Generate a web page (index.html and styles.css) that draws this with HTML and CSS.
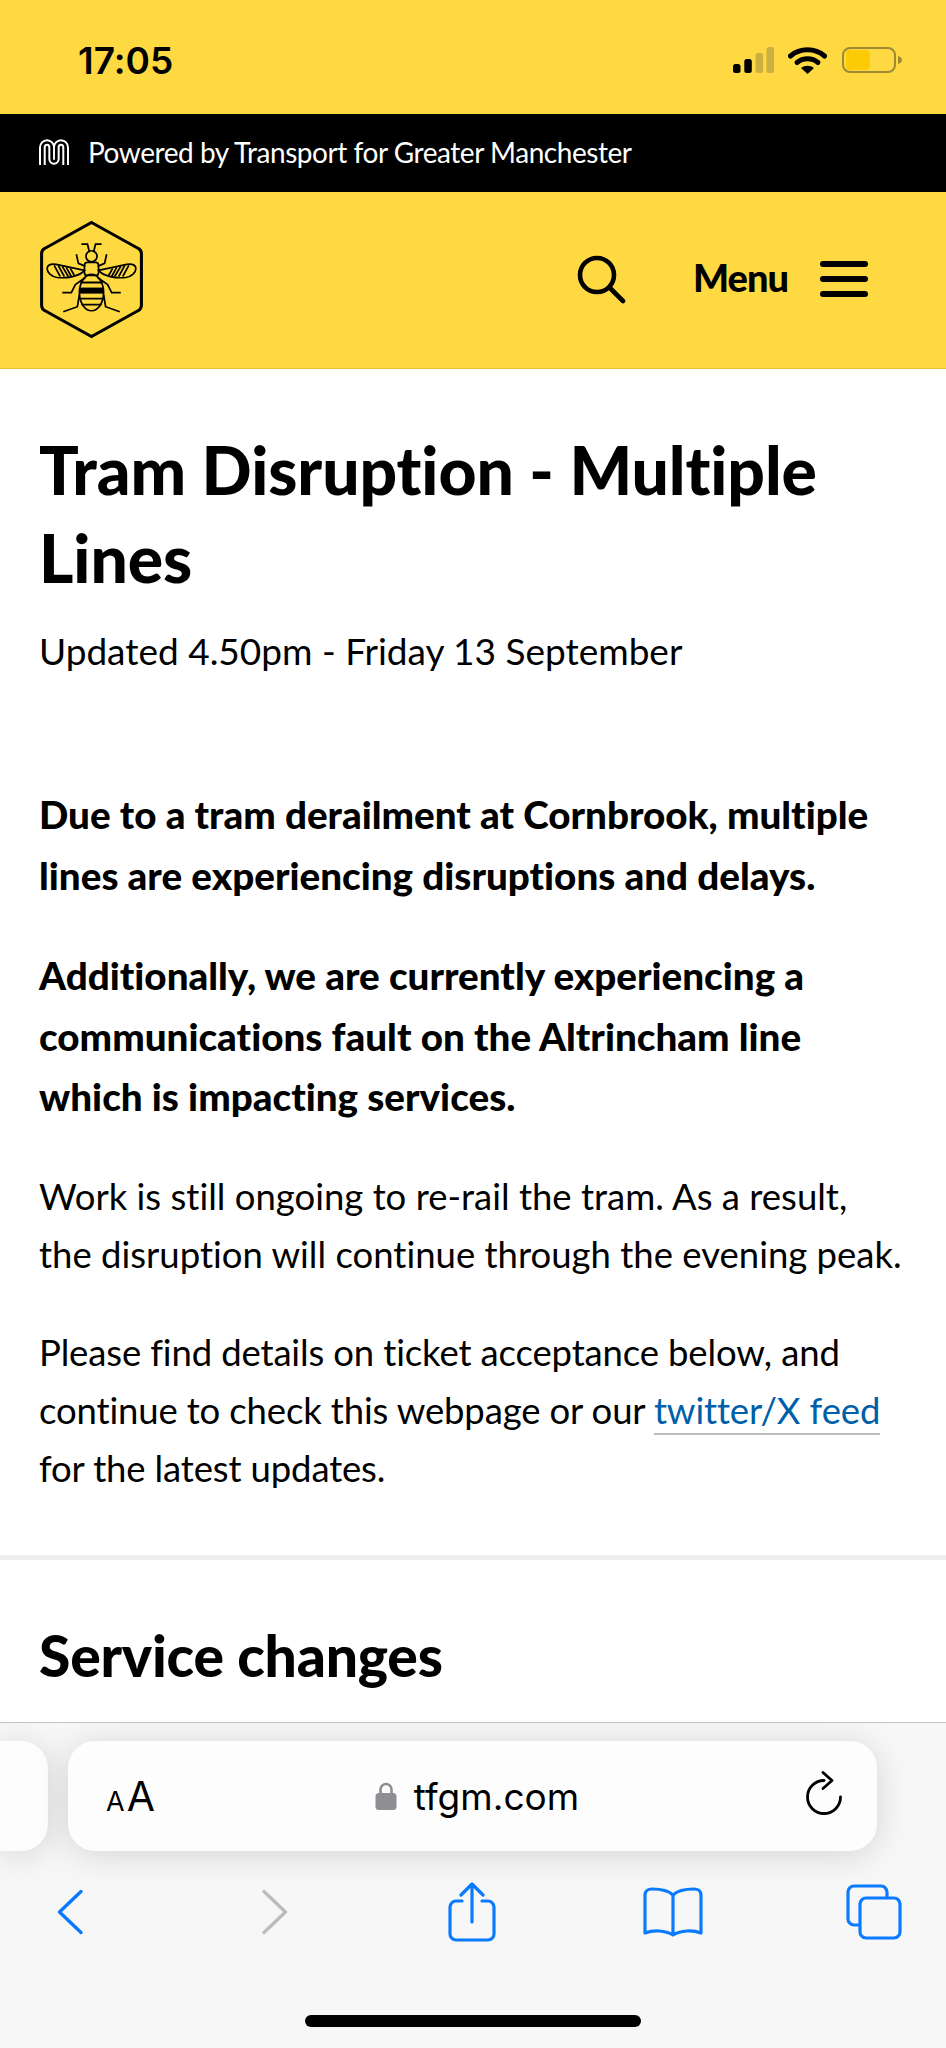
FILE: index.html
```html
<!DOCTYPE html>
<html lang="en">
<head>
  <meta charset="UTF-8"/>
  <meta name="viewport" content="width=device-width,initial-scale=1.0"/>
  <title>Tram Disruption - Multiple Lines</title>
  <link rel="stylesheet" href="styles.css">
</head>
<body>
  <div class="phone">
    <!-- iOS status bar -->
    <div class="status-bar">
      <span class="clock">17:05</span>
      <div class="status-icons">
        <svg class="signal" viewBox="0 0 41 26" width="41" height="26">
          <rect x="0" y="17" width="7.500" height="9" rx="2.500" fill="#000"/>
          <rect x="11.300" y="12" width="7.500" height="14" rx="2.500" fill="#000"/>
          <rect x="22.600" y="6" width="7.500" height="20" rx="2.500" fill="#c9b03f"/>
          <rect x="33.500" y="0" width="7.500" height="26" rx="2.500" fill="#c9b03f"/>
        </svg>
        <svg class="wifi" viewBox="0 0 39 28" width="39" height="28">
          <path d="M2.500 10C12 1.800 27 1.800 36.500 10" fill="none" stroke="#000" stroke-width="5" stroke-linecap="round"/>
          <path d="M9 16.500C15 11.500 24 11.500 30 16.500" fill="none" stroke="#000" stroke-width="5" stroke-linecap="round"/>
          <path d="M13 22C17 19 22 19 26 22L19.500 28Z" fill="#000"/>
        </svg>
        <svg class="battery" viewBox="0 0 60 26" width="60" height="26">
          <rect x="1" y="1" width="52" height="24" rx="7" fill="none" stroke="#9c8a32" stroke-width="2"/>
          <rect x="4" y="3" width="24" height="20" rx="3.500" fill="#fdca06"/>
          <path d="M56 9c2.500.8 4 2.200 4 4s-1.500 3.200-4 4z" fill="#9c8a32"/>
        </svg>
      </div>
    </div>

    <div class="powered-bar">
      <svg class="metro-logo" viewBox="0 0 30 26" width="30" height="26">
        <path d="M3.350 26V8.500a4.670 5 0 0 1 9.350 0V20a2.300 2.300 0 0 0 4.600 0V8.500a4.670 5 0 0 1 9.350 0V26" fill="none" stroke="#fff" stroke-width="6.700"/>
        <path d="M3.350 27V8.500a4.670 5 0 0 1 9.350 0V20a2.300 2.300 0 0 0 4.600 0V8.500a4.670 5 0 0 1 9.350 0V27" fill="none" stroke="#000" stroke-width="2.700"/>
      </svg>
      <span>Powered by Transport for Greater Manchester</span>
    </div>

    <header class="site-header">
      <svg class="bee-logo" viewBox="0 0 106 118" width="107" height="119">
        <path d="M53 2.500 99 28a6 6 0 0 1 3.500 5.500V84.500a6 6 0 0 1-3.500 5.500L53 115.500 7 90a6 6 0 0 1-3.500-5.500V33.500A6 6 0 0 1 7 28Z" fill="none" stroke="#000" stroke-width="3"/>
        <g fill="none" stroke="#000" stroke-width="1.700">
          <circle cx="53" cy="36" r="5.500"/>
          <rect x="46" y="42" width="14" height="13" rx="3"/>
          <ellipse cx="53" cy="72" rx="12" ry="18"/>
          <path d="M43 24h6l2 8M63 24h-6l-2 8M38 34l2 9 7 3M68 34l-2 9-7 3"/>
          <path d="M46 50 18 44c-6-1-9 1-9 4 0 4 4 8 10 9 10 1 22-1 27-7ZM60 50l28-6c6-1 9 1 9 4 0 4-4 8-10 9-10 1-22-1-27-7Z"/>
          <path d="M16 45l6 11M20 45l6 11M24 46l6 10M28 47l5 9M32 48l4 7M90 45l-6 11M86 45l-6 11M82 46l-6 10M78 47l-5 9M74 48l-4 7"/>
          <path d="M47 57 37 64l-4 8H24M59 57l10 7 4 8h9M41 74l-2 12-14 5M65 74l2 12 14 5"/>
        </g>
        <path d="M41 67h24v6H41z" fill="#000"/>
        <path d="M42 62h22M41 78h24M43 84h20" stroke="#000" stroke-width="1.800"/>
      </svg>
      <div class="header-actions">
        <svg class="search-icon" viewBox="0 0 50 50" width="50" height="50">
          <circle cx="21" cy="21" r="17" fill="none" stroke="#000" stroke-width="4.600"/>
          <path d="M33.500 33.500 47 47" stroke="#000" stroke-width="4.600" stroke-linecap="round"/>
        </svg>
        <div class="menu-toggle">
          <span>Menu</span>
          <div class="burger"><i></i><i></i><i></i></div>
        </div>
      </div>
    </header>

    <main class="content">
      <h1>Tram Disruption - Multiple Lines</h1>
      <p class="updated">Updated 4.50pm - Friday 13 September</p>
      <div class="intro">
        <p class="lead">Due to a tram derailment at Cornbrook, multiple lines are experiencing disruptions and delays.</p>
        <p class="lead">Additionally, we are currently experiencing a communications fault on the Altrincham line which is impacting services.</p>
        <p class="body-text wide">Work is still ongoing to re-rail the tram. As a result,<br>the disruption will continue through the evening peak.</p>
        <p class="body-text">Please find details on ticket acceptance below, and continue to check this webpage or our <a href="#">twitter/X feed</a> for the latest updates.</p>
      </div>
      <hr class="divider">
      <h2>Service changes</h2>
    </main>

    <!-- Safari toolbar -->
    <div class="safari-bar">
      <div class="tabs-row">
        <div class="tab-stub"></div>
        <div class="address-pill">
          <span class="aa"><small>A</small>A</span>
          <span class="url">
            <svg viewBox="0 0 22 30" width="22" height="30">
              <path d="M5.500 13V8.500a5.500 5.500 0 0 1 11 0V13" fill="none" stroke="#8e8e93" stroke-width="2.600"/>
              <rect x="0.500" y="12" width="21" height="17" rx="3.500" fill="#8e8e93"/>
            </svg>
            tfgm.com
          </span>
          <svg class="reload" viewBox="0 0 38 44" width="38" height="44">
            <path d="M19 9.500A16.500 16.500 0 1 0 35.500 26" fill="none" stroke="#000" stroke-width="2.800" stroke-linecap="round"/>
            <path d="M18 1.500 27 9.500 18 17.500" fill="none" stroke="#000" stroke-width="2.800" stroke-linecap="round" stroke-linejoin="round"/>
          </svg>
        </div>
      </div>
      <nav class="nav-row">
        <div class="nav-item"><svg viewBox="0 0 28 46" width="28" height="46"><path d="M25 2.500 3.500 23 25 43.500" fill="none" stroke="#0a7aff" stroke-width="3.400" stroke-linecap="round" stroke-linejoin="round"/></svg></div>
        <div class="nav-item nudge"><svg viewBox="0 0 28 46" width="28" height="46"><path d="M3 2.500 24.500 23 3 43.500" fill="none" stroke="#bcbcbc" stroke-width="3.400" stroke-linecap="round" stroke-linejoin="round"/></svg></div>
        <div class="nav-item"><svg viewBox="0 0 48 60" width="48" height="60"><path d="M14 19H8a6 6 0 0 0-6 6v27a6 6 0 0 0 6 6h32a6 6 0 0 0 6-6V25a6 6 0 0 0-6-6h-6M24 40V3M13 13 24 2l11 11" fill="none" stroke="#0a7aff" stroke-width="3.200" stroke-linecap="round" stroke-linejoin="round"/></svg></div>
        <div class="nav-item"><svg viewBox="0 0 60 50" width="60" height="50"><path d="M30 8C25 3 18 2 9 2 5 2 2 4 2 8v38c8-3 20-3 28 2 8-5 20-5 28-2V8c0-4-3-6-7-6-9 0-16 1-21 6ZM30 8v38" fill="none" stroke="#0a7aff" stroke-width="3.200" stroke-linecap="round" stroke-linejoin="round"/></svg></div>
        <div class="nav-item"><svg viewBox="0 0 56 56" width="56" height="56"><path d="M14 41H8a6 6 0 0 1-6-6V8a6 6 0 0 1 6-6h27a6 6 0 0 1 6 6v5" fill="none" stroke="#0a7aff" stroke-width="3.200"/><rect x="14" y="14" width="40" height="40" rx="6" fill="none" stroke="#0a7aff" stroke-width="3.200"/></svg></div>
      </nav>
      <div class="home-indicator"></div>
    </div>
  </div>
</body>
</html>
```

FILE: styles.css
```css
:root {
  --yellow: #ffd942;
  --text: #000;
  --link: #005fa8;
  --chrome: #f7f7f7;
}
* { box-sizing: border-box; }
html, body { height: 100%; }
body {
  margin: 0;
  background: #fff;
  color: var(--text);
  font-family: "Lato", "Noto Sans", sans-serif;
  font-variant-ligatures: none;
}
.phone {
  display: flex;
  flex-direction: column;
  height: 2048px;
  overflow: hidden;
}

/* Status bar */
.status-bar {
  flex: 0 0 114px;
  display: flex;
  justify-content: space-between;
  align-items: center;
  padding: 6px 44px 0 78px;
  background: var(--yellow);
}
.clock {
  font-family: "Inter", sans-serif;
  font-size: 37px;
  font-weight: 600;
}
.status-icons {
  display: flex;
  align-items: center;
  gap: 14px;
}
.battery { margin-left: 1px; }

/* Black strip */
.powered-bar {
  flex: 0 0 78px;
  display: flex;
  align-items: center;
  gap: 19px;
  padding: 0 0 2px 39px;
  background: #000;
  color: #fff;
  font-size: 28px;
  letter-spacing: -0.45px;
}

/* Site header */
.site-header {
  flex: 0 0 177px;
  display: flex;
  align-items: center;
  justify-content: space-between;
  padding: 0 78px 0 38px;
  background: var(--yellow);
  border-bottom: 1px solid #e8c52e;
}
.bee-logo { margin-top: -2px; }
.header-actions {
  display: flex;
  align-items: center;
  gap: 67px;
  margin-top: -2px;
}
.menu-toggle {
  display: flex;
  align-items: center;
  gap: 32px;
  font-size: 38px;
  font-weight: 900;
  letter-spacing: -1px;
}
.menu-toggle span { margin-top: -4px; }
.burger {
  display: flex;
  flex-direction: column;
  gap: 9px;
}
.burger i {
  display: block;
  width: 48px;
  height: 6px;
  border-radius: 3px;
  background: #000;
}

/* Article */
.content {
  flex: 1;
  padding-top: 57px;
}
h1 {
  margin: 0 39px;
  font-size: 66px;
  line-height: 88px;
  font-weight: 900;
  letter-spacing: -0.1px;
}
.updated {
  margin: 24px 39px 0;
  font-size: 37px;
  line-height: 50px;
}
.intro {
  margin: 108px 39px 0;
}
.lead {
  margin: 0 0 40px;
  font-size: 38.600px;
  line-height: 60.500px;
  font-weight: 900;
}
.body-text {
  margin: 0 0 40px;
  font-size: 36.500px;
  line-height: 58px;
  letter-spacing: -0.15px;
}
.body-text.wide { letter-spacing: 0; margin-right: -4px; }
.body-text:last-child { margin-bottom: 0; }
a {
  color: var(--link);
  text-decoration: underline;
  text-decoration-color: #bbb;
  text-decoration-thickness: 2px;
  text-underline-offset: 9px;
}
.divider {
  margin: 58px 0 0;
  border: 0;
  height: 5px;
  background: #eee;
}
h2 {
  margin: 60px 39px 0;
  font-size: 57px;
  line-height: 70px;
  font-weight: 900;
  letter-spacing: -0.2px;
}

/* Safari toolbar */
.safari-bar {
  flex: 0 0 326px;
  display: flex;
  flex-direction: column;
  background: var(--chrome);
  border-top: 1px solid #c4c4c4;
}
.tabs-row {
  display: flex;
  gap: 20px;
  margin-top: 18px;
}
.tab-stub, .address-pill {
  height: 110px;
  background: #fdfdfd;
  border-radius: 27px;
  box-shadow: 0 4px 34px rgba(0,0,0,0.14);
}
.tab-stub { width: 48px; border-radius: 0 27px 27px 0; }
.address-pill {
  width: 809px;
  display: flex;
  align-items: center;
  justify-content: space-between;
  padding: 0 34px 0 38px;
}
.aa { font-family: "Inter", sans-serif; font-size: 41px; }
.aa small { font-size: 27px; margin-right: 2px; }
.url {
  display: flex;
  align-items: center;
  gap: 17px;
  margin-right: 6px;
  font-family: "Inter", sans-serif;
  font-size: 37px;
}
.reload { margin-top: -6px; }
.nav-row {
  display: flex;
  align-items: center;
  gap: 141px;
  height: 60px;
  padding-left: 40px;
  margin-top: 31px;
}
.nav-item {
  flex: 0 0 60px;
  display: flex;
  justify-content: center;
}
.nudge { padding-left: 8px; }
.home-indicator {
  width: 336px;
  height: 12px;
  margin: 73px 0 0 305px;
  border-radius: 6px;
  background: #000;
}
```
